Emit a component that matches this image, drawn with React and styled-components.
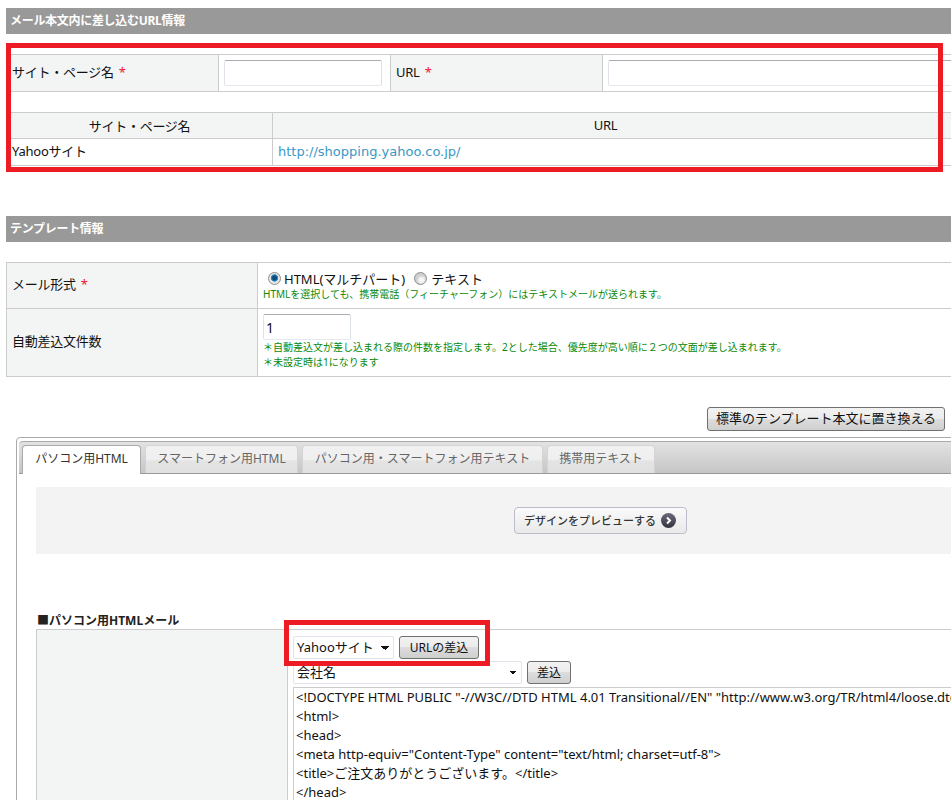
import React from "react";
import styled, { createGlobalStyle } from "styled-components";

const GlobalStyle = createGlobalStyle`
  html, body {
    margin: 0;
    padding: 0;
    background: #fff;
  }
  body {
    font-family: "Noto Sans", "Noto Sans CJK JP", sans-serif;
    font-size: 13px;
    color: #111;
  }
`;

const Viewport = styled.div`
  width: 951px;
  height: 800px;
  overflow: hidden;
`;

const Page = styled.div`
  width: 1200px;
  padding: 8px 0 0 6px;
`;

const SectionTitle = styled.h2`
  margin: ${(p) => p.$top || 0}px 0 0;
  height: 26px;
  line-height: 25px;
  padding-left: 4px;
  background: #999;
  color: #fff;
  font-size: 12px;
  font-weight: 700;
  letter-spacing: -0.3px;
`;

const UrlBlock = styled.div`
  position: relative;
  padding-top: 20px;
`;

const Highlight = styled.div`
  position: absolute;
  box-sizing: border-box;
  border: 5px solid #ed1c24;
  left: ${(p) => p.$left}px;
  top: ${(p) => p.$top}px;
  width: ${(p) => p.$width}px;
  height: ${(p) => p.$height}px;
  pointer-events: none;
`;

const Table = styled.table`
  width: 1190px;
  margin-top: ${(p) => p.$top ?? 20}px;
  border-collapse: collapse;
  table-layout: fixed;
`;

const Label = styled.th`
  width: ${(p) => (p.$width ? `${p.$width}px` : "auto")};
  height: ${(p) => p.$height || 37}px;
  padding: 0 ${(p) => p.$right || 5}px ${(p) => p.$bottom ?? 3}px 5px;
  box-sizing: border-box;
  background: #f3f5f4;
  border: 1px solid #ccc;
  font-size: 13px;
  font-weight: 400;
  letter-spacing: -0.25px;
  text-align: ${(p) => p.$align || "left"};
  vertical-align: middle;
`;

const Cell = styled.td`
  width: ${(p) => (p.$width ? `${p.$width}px` : "auto")};
  height: ${(p) => p.$height || 26}px;
  padding: ${(p) => p.$pad || "0 5px"};
  box-sizing: border-box;
  border: 1px solid #ccc;
  vertical-align: ${(p) => p.$valign || "middle"};
  position: relative;
`;

const Required = styled.span`
  color: #f0142d;
  margin-left: 5px;
`;

const TextInput = styled.input`
  display: block;
  box-sizing: border-box;
  width: ${(p) => p.$width}px;
  height: 26px;
  padding: 0 2px;
  background: #fff;
  border: 1px solid;
  border-color: #abadb3 #dbdfe6 #e3e9ef #e2e3ea;
  border-radius: 2px;
  font-family: inherit;
  font-size: 14px;
  color: #111;
`;

const UrlLink = styled.a`
  color: #3a97c6;
  font-size: 13px;
  font-family: "DejaVu Sans", sans-serif;
  letter-spacing: 0;
  text-decoration: none;
`;

const RowText = styled.span`
  display: block;
  margin-bottom: 3px;
  letter-spacing: -0.25px;
`;

const RadioRow = styled.div`
  display: flex;
  align-items: center;
  height: 17px;
  padding-left: 5px;
  font-size: 13px;
`;

const Radio = styled.span`
  flex: none;
  width: 13px;
  height: 13px;
  box-sizing: border-box;
  margin-right: ${(p) => p.$gap}px;
  border-radius: 50%;
  border: 1px solid #8e8e8e;
  background: ${(p) =>
    p.$checked
      ? "radial-gradient(circle at 50% 45%, #0b4f7e 0 2px, #3d93c6 3.4px, #e6e6e6 4px)"
      : "radial-gradient(circle at 60% 65%, #f6f6f6 0 2px, #cfcfcf 5px)"};
`;

const Gap = styled.span`
  flex: none;
  width: ${(p) => p.$width}px;
`;

const Note = styled.div`
  color: #0a8a0a;
  font-size: 10px;
  line-height: ${(p) => p.$line || 15}px;
`;

const ButtonRow = styled.div`
  width: 939px;
  margin-top: 30px;
  display: flex;
  justify-content: flex-end;
`;

const SystemButton = styled.button`
  box-sizing: border-box;
  width: ${(p) => p.$width}px;
  height: ${(p) => p.$height || 23}px;
  padding: 0 0 ${(p) => p.$lift || 2}px;
  border: 1px solid #707070;
  border-radius: 3px;
  background: linear-gradient(#f2f2f2 0, #ebebeb 50%, #ddd 50%, #cfcfcf 100%);
  font-family: inherit;
  font-size: ${(p) => p.$size || 12}px;
  color: #111;
  white-space: nowrap;
`;

const TabFrame = styled.div`
  margin: 6px 0 0 10px;
  padding: 3px 2px;
  height: 500px;
  border: 1px solid #aaa;
  border-radius: 4px 0 0 0;
`;

const TabBar = styled.div`
  display: flex;
  align-items: flex-end;
  gap: 4px;
  box-sizing: border-box;
  height: 33px;
  padding-left: 3px;
  background: linear-gradient(#e2e2e2, #c6c6c6);
  border-top: 1px solid #aaa;
  border-bottom: 1px solid #999;
  border-radius: 4px 0 0 0;
`;

const Tab = styled.div`
  box-sizing: border-box;
  width: ${(p) => p.$width}px;
  height: ${(p) => (p.$active ? 29 : 28)}px;
  margin-bottom: ${(p) => (p.$active ? -1 : 0)}px;
  line-height: 26px;
  text-align: center;
  font-size: 12px;
  color: ${(p) => (p.$active ? "#333" : "#666")};
  background: ${(p) =>
    p.$active ? "#fff" : "linear-gradient(#f1f1f1 0, #efefef 50%, #e4e4e4 55%, #e0e0e0 100%)"};
  border: 1px solid ${(p) => (p.$active ? "#aaa" : "#d4d4d4")};
  border-bottom: none;
  border-radius: 4px 4px 0 0;
`;

const TabBody = styled.div`
  padding: 13px 0 0 17px;
`;

const PreviewPanel = styled.div`
  display: flex;
  align-items: center;
  height: 67px;
  padding-left: 478px;
  background: #f3f3f3;
`;

const PreviewButton = styled.button`
  display: flex;
  align-items: center;
  gap: 5px;
  box-sizing: border-box;
  width: 173px;
  height: 27px;
  padding: 0 0 1px 9px;
  border: 1px solid #bcbccb;
  border-radius: 4px;
  background: linear-gradient(#fafafa, #e9e9e9);
  font-family: inherit;
  font-size: 11px;
  font-weight: 500;
  color: #333;
  white-space: nowrap;
`;

const MailHeading = styled.div`
  margin-top: 59px;
  padding-left: 1px;
  height: 16px;
  line-height: 15px;
  font-size: 12px;
  font-weight: 700;
  color: #222;
`;

const EditorTable = styled.table`
  width: 1190px;
  border-collapse: collapse;
  table-layout: fixed;
`;

const ControlRow = styled.div`
  display: flex;
  align-items: center;
  gap: 5px;
  margin-bottom: ${(p) => p.$bottom || 2}px;
`;

const FakeSelect = styled.select`
  box-sizing: border-box;
  width: ${(p) => p.$width}px;
  height: 23px;
  padding: 0 3px 2px;
  appearance: none;
  background-color: #fff;
  background-image: linear-gradient(45deg, transparent 50%, #111 50%),
    linear-gradient(-45deg, transparent 50%, #111 50%);
  background-size: 4px 4px;
  background-repeat: no-repeat;
  background-position: calc(100% - 8px) 9px, calc(100% - 4px) 9px;
  border: 1px solid #e3e3ee;
  border-radius: 2px;
  font-family: inherit;
  font-size: 13px;
  color: #111;
`;

const SourceArea = styled.textarea`
  display: block;
  box-sizing: border-box;
  width: 860px;
  height: 300px;
  padding: 0 2px;
  border: 1px solid #ccc;
  resize: none;
  overflow: hidden;
  white-space: pre;
  font-family: inherit;
  font-size: 13px;
  line-height: 19px;
  color: #111;
`;

const sourceText = `<!DOCTYPE HTML PUBLIC "-//W3C//DTD HTML 4.01 Transitional//EN" "http://www.w3.org/TR/html4/loose.dtd">
<html>
<head>
<meta http-equiv="Content-Type" content="text/html; charset=utf-8">
<title>ご注文ありがとうございます。</title>
</head>
<body>`;

function ArrowIcon() {
  return (
    <svg width="15" height="15" viewBox="0 0 15 15">
      <defs>
        <linearGradient id="arrowFill" x1="0" y1="0" x2="0" y2="1">
          <stop offset="0" stopColor="#6a6a7c" />
          <stop offset="1" stopColor="#33333f" />
        </linearGradient>
      </defs>
      <circle cx="7.5" cy="7.5" r="7.5" fill="url(#arrowFill)" />
      <path d="M6 4.5 L9 7.5 L6 10.5" fill="none" stroke="#fff" strokeWidth="2" />
    </svg>
  );
}

export default function App() {
  return (
    <Viewport>
      <GlobalStyle />
      <Page>
        <SectionTitle>メール本文内に差し込むURL情報</SectionTitle>
        <UrlBlock>
          <Table $top={0}>
            <tbody>
              <tr>
                <Label $width={212}>サイト・ページ名<Required>*</Required></Label>
                <Cell $width={172}><TextInput $width={158} /></Cell>
                <Label $width={212}>URL<Required>*</Required></Label>
                <Cell><TextInput $width={500} /></Cell>
              </tr>
            </tbody>
          </Table>
          <Table>
            <tbody>
              <tr>
                <Label $width={266} $height={26} $align="center" $bottom={1}>サイト・ページ名</Label>
                <Label $height={26} $align="center" $right={262} $bottom={1}>URL</Label>
              </tr>
              <tr>
                <Cell $height={27}><RowText>Yahooサイト</RowText></Cell>
                <Cell $height={27}><RowText><UrlLink>http://shopping.yahoo.co.jp/</UrlLink></RowText></Cell>
              </tr>
            </tbody>
          </Table>
          <Highlight $left={0} $top={9} $width={937} $height={129} />
        </UrlBlock>

        <SectionTitle $top={50}>テンプレート情報</SectionTitle>
        <Table>
          <tbody>
            <tr>
              <Label $width={251} $height={46} $bottom={5}>メール形式<Required>*</Required></Label>
              <Cell $height={46} $pad="7px 5px 0" $valign="top">
                <RadioRow>
                  <Radio $checked $gap={3} />
                  HTML(マルチパート)
                  <Gap $width={9} />
                  <Radio $gap={4} />
                  テキスト
                </RadioRow>
                <Note $line={14}>HTMLを選択しても、携帯電話（フィーチャーフォン）にはテキストメールが送られます。</Note>
              </Cell>
            </tr>
            <tr>
              <Label $height={68} $bottom={5}>自動差込文件数</Label>
              <Cell $height={68} $pad="5px 5px 0" $valign="top">
                <TextInput $width={88} value="1" readOnly />
                <Note>＊自動差込文が差し込まれる際の件数を指定します。2とした場合、優先度が高い順に２つの文面が差し込まれます。</Note>
                <Note>＊未設定時は1になります</Note>
              </Cell>
            </tr>
          </tbody>
        </Table>

        <ButtonRow>
          <SystemButton $width={238} $height={24} $size={13} $lift={3}>標準のテンプレート本文に置き換える</SystemButton>
        </ButtonRow>

        <TabFrame>
          <TabBar>
            <Tab $active $width={119}>パソコン用HTML</Tab>
            <Tab $width={153}>スマートフォン用HTML</Tab>
            <Tab $width={241}>パソコン用・スマートフォン用テキスト</Tab>
            <Tab $width={108}>携帯用テキスト</Tab>
          </TabBar>
          <TabBody>
            <PreviewPanel>
              <PreviewButton>デザインをプレビューする<ArrowIcon /></PreviewButton>
            </PreviewPanel>
            <MailHeading>■パソコン用HTMLメール</MailHeading>
            <EditorTable>
              <tbody>
                <tr>
                  <Label $width={251} $height={200} />
                  <Cell $height={200} $pad="6px 5px" $valign="top">
                    <ControlRow>
                      <FakeSelect $width={101}><option>Yahooサイト</option></FakeSelect>
                      <SystemButton $width={80}>URLの差込</SystemButton>
                    </ControlRow>
                    <ControlRow $bottom={3}>
                      <FakeSelect $width={229}><option>会社名</option></FakeSelect>
                      <SystemButton $width={44}>差込</SystemButton>
                    </ControlRow>
                    <SourceArea value={sourceText} readOnly />
                    <Highlight $left={-4} $top={-10} $width={206} $height={46} />
                  </Cell>
                </tr>
              </tbody>
            </EditorTable>
          </TabBody>
        </TabFrame>
      </Page>
    </Viewport>
  );
}
